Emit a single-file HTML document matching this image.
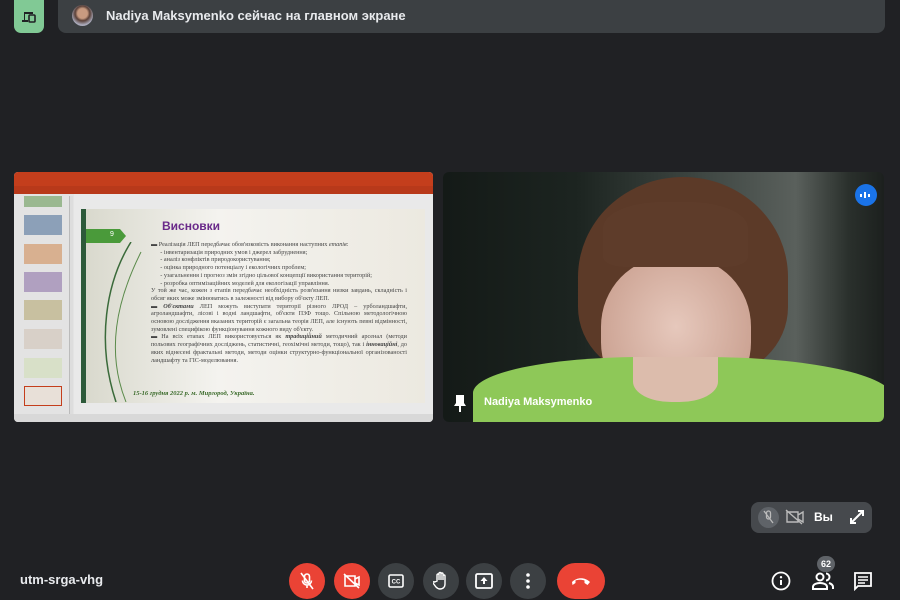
<!DOCTYPE html>
<html><head><meta charset="utf-8"><style>
*{margin:0;padding:0;box-sizing:border-box}
body{width:900px;height:600px;background:#202124;position:relative;overflow:hidden;font-family:"Liberation Sans","DejaVu Sans",sans-serif;color:#e8eaed}
.abs{position:absolute}
.btn{position:absolute;top:563px;width:36px;height:36px;border-radius:18px;background:#3c4043;display:flex;align-items:center;justify-content:center}
.red{background:#ea4335}
.ptxt{font-family:"Liberation Serif",serif;color:#444;font-size:6.2px;line-height:7.7px;position:absolute;text-align:justify}
</style></head><body>
<!-- top -->
<div class="abs" style="left:14px;top:0;width:30px;height:33px;background:#81c995;border-radius:0 0 7px 7px;display:flex;align-items:center;justify-content:center">
<svg width="16" height="14" viewBox="0 0 16 14"><path d="M3 2h9v2H4v6h3v2H1v-2h2z" fill="#202124"/><rect x="8" y="5" width="6" height="7" rx="1" fill="none" stroke="#202124" stroke-width="1.6"/></svg></div>
<div class="abs" style="left:58px;top:0;width:827px;height:33px;background:#3c4043;border-radius:0 0 8px 8px"></div>
<div class="abs" style="left:72px;top:5px;width:21px;height:21px;border-radius:50%;background:radial-gradient(circle at 50% 40%,#c89a80 0 30%,#5a4038 45%,#aab 70%)"></div>
<div class="abs" style="left:106px;top:8px;font-size:13px;font-weight:bold;color:#e8eaed">Nadiya Maksymenko сейчас на главном экране</div>

<!-- presentation tile -->
<div class="abs" style="left:14px;top:172px;width:419px;height:250px;background:#e6e6e6;border-radius:4px;overflow:hidden">
 <div class="abs" style="left:0;top:0;width:419px;height:22px;background:#c43e1c"></div>
 <div class="abs" style="left:0;top:14px;width:419px;height:8px;background:#b8391a"></div>
 <div class="abs" style="left:0;top:22px;width:419px;height:220px;background:#e9e9e9"></div>
 <div class="abs" style="left:0;top:22px;width:60px;height:220px;background:#e3e3e3"></div>
 <div class="abs" style="left:10px;top:24px;width:38px;height:11px;background:#9ab890"></div>
 <div class="abs" style="left:10px;top:43px;width:38px;height:20px;background:#8ca0b8"></div>
 <div class="abs" style="left:10px;top:72px;width:38px;height:20px;background:#d8b090"></div>
 <div class="abs" style="left:10px;top:100px;width:38px;height:20px;background:#b0a0c0"></div>
 <div class="abs" style="left:10px;top:128px;width:38px;height:20px;background:#c8c0a0"></div>
 <div class="abs" style="left:10px;top:157px;width:38px;height:20px;background:#d8d0c8"></div>
 <div class="abs" style="left:10px;top:186px;width:38px;height:20px;background:#d8e0c8"></div>
 <div class="abs" style="left:10px;top:214px;width:38px;height:20px;background:#e8e0d8;border:1px solid #c43e1c"></div>
 <div class="abs" style="left:55px;top:24px;width:4px;height:218px;background:#ddd;border-left:1px solid #bbb"></div>
 <div class="abs" style="left:67px;top:37px;width:344px;height:194px;background:linear-gradient(90deg,#d8d8cc,#f4f3ef 40%,#ece9e0)"></div>
 <div class="abs" style="left:67px;top:37px;width:5px;height:194px;background:#2d5a3a"></div>
 <div class="abs" style="left:72px;top:57px;width:40px;height:14px;background:#4a9a3a;clip-path:polygon(0 0,85% 0,100% 50%,85% 100%,0 100%)"></div>
 <div class="abs" style="left:96px;top:59px;font-size:7px;color:#fff">9</div>
 <div class="abs" style="left:148px;top:47px;font-size:12px;font-weight:bold;color:#6a2a8a">Висновки</div>
 <svg class="abs" style="left:72px;top:70px" width="60" height="160"><path d="M45 0 C20 40,10 100,30 160" stroke="#3a6a3a" fill="none" stroke-width="1.5"/><path d="M55 10 C30 60,20 110,40 160" stroke="#5a8a4a" fill="none"/></svg>
 <div class="ptxt" style="left:137px;top:69px;width:256px">▬ Реалізація ЛЕП передбачає обов'язковість виконання наступних <i>етапів</i>:<br>&nbsp;&nbsp;&nbsp;&nbsp;&nbsp;&nbsp;- інвентаризація природних умов і джерел забруднення;<br>&nbsp;&nbsp;&nbsp;&nbsp;&nbsp;&nbsp;- аналіз конфліктів природокористування;<br>&nbsp;&nbsp;&nbsp;&nbsp;&nbsp;&nbsp;- оцінка природного потенціалу і екологічних проблем;<br>&nbsp;&nbsp;&nbsp;&nbsp;&nbsp;&nbsp;- узагальнення і прогноз змін згідно цільової концепції використання територій;<br>&nbsp;&nbsp;&nbsp;&nbsp;&nbsp;&nbsp;- розробка оптимізаційних моделей для екологізації управління.<br>У той же час, кожен з етапів передбачає необхідність розв'язання низки завдань, складність і обсяг яких може змінюватись в залежності від вибору об'єкту ЛЕП.<br>▬ <b><i>Об'єктами</i></b> ЛЕП можуть виступати території різного ЛРОД – урболандшафти, агроландшафти, лісові і водні ландшафти, об'єкти ПЗФ тощо. Спільною методологічною основою дослідження вказаних територій є загальна теорія ЛЕП, але існують певні відмінності, зумовлені специфікою функціонування кожного виду об'єкту.<br>▬ На всіх етапах ЛЕП використовується як <b><i>традиційний</i></b> методичний арсенал (методи польових географічних досліджень, статистичні, геохімічні методи, тощо), так і <b><i>інноваційні</i></b>, до яких віднесені фрактальні методи, методи оцінки структурно-функціональної організованості ландшафту та ГІС-моделювання.</div>
 <div class="abs" style="left:119px;top:218px;font-family:'Liberation Serif',serif;font-style:italic;font-weight:bold;font-size:6.5px;color:#3a6a2a">15-16 грудня 2022 р. м. Миргород, Україна.</div>
 <div class="abs" style="left:0;top:242px;width:419px;height:8px;background:#d8d8d8"></div>
</div>

<!-- webcam tile -->
<div class="abs" style="left:443px;top:172px;width:441px;height:250px;border-radius:6px;overflow:hidden;background:linear-gradient(90deg,#141a17 0,#1c2420 30%,#404844 60%,#5a605c 80%,#2a302c 92%,#1c201e)">
 <div class="abs" style="left:135px;top:5px;width:210px;height:200px;border-radius:50% 50% 35% 35%;background:#5c3a28"></div>
 <div class="abs" style="left:158px;top:85px;width:150px;height:155px;border-radius:45%;background:radial-gradient(ellipse at 50% 45%,#e6c8bc,#caa090 80%)"></div>
 <div class="abs" style="left:160px;top:30px;width:145px;height:65px;border-radius:40% 40% 15% 15%;background:#5e3c2a"></div>
 <div class="abs" style="left:30px;top:185px;width:420px;height:90px;border-radius:40% 45% 0 0;background:#8ec858"></div>
 <div class="abs" style="left:190px;top:185px;width:85px;height:45px;border-radius:0 0 45% 45%;background:#dcbcac"></div>
 <div class="abs" style="left:412px;top:12px;width:22px;height:22px;border-radius:50%;background:#1a73e8"></div>
 <div class="abs" style="left:417px;top:20px;width:12px;height:6px;display:flex;gap:2px;align-items:center"><i style="width:2px;height:3px;background:#fff"></i><i style="width:2px;height:6px;background:#fff"></i><i style="width:2px;height:3px;background:#fff"></i></div>
 <svg class="abs" style="left:10px;top:222px" width="14" height="18" viewBox="0 0 14 18"><path d="M3 1h8v8l2 3H1l2-3z M6 12h2v6H6z" fill="#fff"/></svg>
 <div class="abs" style="left:41px;top:224px;font-size:11px;font-weight:bold;color:#fff">Nadiya Maksymenko</div>
</div>

<!-- self view -->
<div class="abs" style="left:751px;top:502px;width:121px;height:31px;border-radius:8px;background:#46494d"></div>
<div class="abs" style="left:758px;top:507px;width:21px;height:21px;border-radius:50%;background:#5f6368"></div>
<svg class="abs" style="left:762px;top:510px" width="13" height="14" viewBox="0 0 13 14"><path d="M6.5 1a2 2 0 0 1 2 2v4a2 2 0 0 1-4 0V3a2 2 0 0 1 2-2zM2 1l9 12" stroke="#bbb" fill="none" stroke-width="1.3"/></svg>
<svg class="abs" style="left:785px;top:509px" width="20" height="16" viewBox="0 0 20 16"><path d="M2 3h11v10H2z M13 6l5-3v10l-5-3 M1 1l16 14" stroke="#bbb" fill="none" stroke-width="1.4"/></svg>
<div class="abs" style="left:814px;top:510px;font-size:12px;font-weight:bold;color:#fff">Вы</div>
<svg class="abs" style="left:849px;top:509px" width="16" height="16" viewBox="0 0 16 16"><path d="M2 14L14 2M9 2h5v5M2 9v5h5" stroke="#fff" fill="none" stroke-width="2"/></svg>

<!-- bottom bar -->
<div class="abs" style="left:20px;top:572px;font-size:13px;font-weight:bold;color:#e8eaed">utm-srga-vhg</div>
<div class="btn red" style="left:289px"><svg width="16" height="18" viewBox="0 0 16 18"><path d="M8 2a2.5 2.5 0 0 1 2.5 2.5v4a2.5 2.5 0 0 1-5 0v-4A2.5 2.5 0 0 1 8 2zM3.5 8.5a4.5 4.5 0 0 0 9 0M8 13v3M2 1l12 16" stroke="#fff" fill="none" stroke-width="1.6"/></svg></div>
<div class="btn red" style="left:334px"><svg width="18" height="16" viewBox="0 0 18 16"><path d="M2 3h10v10H2zM12 6l4-2v8l-4-2M1 1l15 14" stroke="#fff" fill="none" stroke-width="1.6"/></svg></div>
<div class="btn" style="left:378px"><svg width="16" height="14" viewBox="0 0 16 14"><rect x="1" y="1" width="14" height="12" rx="1.5" fill="none" stroke="#fff" stroke-width="1.6"/><text x="8" y="9.5" font-size="6" font-weight="bold" fill="#fff" text-anchor="middle" font-family="Liberation Sans">CC</text></svg></div>
<div class="btn" style="left:423px"><svg width="16" height="20" viewBox="0 0 16 20"><path d="M4 10V4a1 1 0 0 1 2 0v5V2.5a1 1 0 0 1 2 0V9V3a1 1 0 0 1 2 0v6V5a1 1 0 0 1 2 0v8c0 3-2 5-5 5-2 0-3-1-4-2l-3-4c-.5-.8.7-1.8 1.5-1z" stroke="#fff" fill="none" stroke-width="1.4"/></svg></div>
<div class="btn" style="left:466px"><svg width="18" height="16" viewBox="0 0 18 16"><rect x="1" y="1" width="16" height="14" rx="1.5" fill="none" stroke="#fff" stroke-width="1.8"/><path d="M9 4l-3.5 4H8v3h2V8h2.5z" fill="#fff"/></svg></div>
<div class="btn" style="left:510px"><svg width="4" height="16" viewBox="0 0 4 16"><circle cx="2" cy="2" r="1.8" fill="#fff"/><circle cx="2" cy="8" r="1.8" fill="#fff"/><circle cx="2" cy="14" r="1.8" fill="#fff"/></svg></div>
<div class="btn red" style="left:557px;width:48px"><svg width="20" height="10" viewBox="0 0 20 10"><path d="M1 6c5-5 13-5 18 0l-2.5 3-3-2V4.5c-2.8-1-6.2-1-9 0V7l-3 2z" fill="#fff"/></svg></div>
<svg class="abs" style="left:771px;top:571px" width="20" height="20" viewBox="0 0 20 20"><circle cx="10" cy="10" r="8.5" stroke="#fff" fill="none" stroke-width="1.8"/><path d="M10 9v5" stroke="#fff" stroke-width="2"/><circle cx="10" cy="6.2" r="1.2" fill="#fff"/></svg>
<div class="abs" style="left:817px;top:556px;width:18px;height:16px;border-radius:8px;background:#5f6368;font-size:9px;font-weight:bold;color:#fff;text-align:center;line-height:16px">62</div>
<svg class="abs" style="left:812px;top:572px" width="22" height="18" viewBox="0 0 22 18"><circle cx="8" cy="5" r="3.5" stroke="#fff" fill="none" stroke-width="2"/><path d="M1 17v-2c0-3 4-4 7-4s7 1 7 4v2z" stroke="#fff" fill="none" stroke-width="2"/><path d="M14 1.5a3.5 3.5 0 0 1 0 7M17 11c2 .7 4 2 4 4v2" stroke="#fff" fill="none" stroke-width="2"/></svg>
<svg class="abs" style="left:854px;top:572px" width="18" height="19" viewBox="0 0 18 19"><path d="M1 1h16v13H4l-3 3z" stroke="#fff" fill="none" stroke-width="1.8"/><path d="M4 5h10M4 8h10M4 11h7" stroke="#fff" stroke-width="1.6"/></svg>
</body></html>
